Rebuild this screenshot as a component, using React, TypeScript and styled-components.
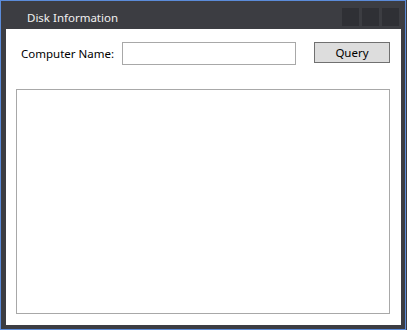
import React from "react";
import styled, { createGlobalStyle } from "styled-components";

//******** COMPONENTS ********//

const GlobalStyle = createGlobalStyle`
  html, body {
    margin: 0;
    padding: 0;
    background: #3c3d42;
  }
  * {
    box-sizing: border-box;
  }
`;

const App = () => {
  return (
    <>
      <GlobalStyle />
      <SWindow>
        <STitleBar>
          <STitle>Disk Information</STitle>
          <SCaptionButtons>
            <SCaptionButton />
            <SCaptionButton />
            <SCaptionButton />
          </SCaptionButtons>
        </STitleBar>
        <SClient>
          <SQueryRow>
            <SLabel>Computer Name:</SLabel>
            <SInput type="text" />
            <SButton type="button">Query</SButton>
          </SQueryRow>
          <SListBox />
        </SClient>
      </SWindow>
    </>
  );
};

export default App;

//******** STYLES ********//

const SWindow = styled.div`
  width: 406px;
  height: 330px;
  border: 1px solid #5b8bd9;
  background: #3c3d42;
  padding: 0 4px 4px 5px;
  display: flex;
  flex-direction: column;
  font-family: "Noto Sans", "Open Sans", sans-serif;
`;

const STitleBar = styled.div`
  height: 28px;
  display: flex;
  align-items: center;
  justify-content: space-between;
  padding: 7px 2px 1px 21px;
`;

const STitle = styled.span`
  color: #f1f1f1;
  font-size: 11.5px;
  margin-top: -1px;
`;

const SCaptionButtons = styled.div`
  display: flex;
  gap: 3px;
  align-self: flex-start;
`;

const SCaptionButton = styled.div`
  width: 17px;
  height: 18px;
  background: #2f3035;
`;

const SClient = styled.div`
  flex: 1;
  background: #ffffff;
  padding: 13px 11px 0 10px;
  display: flex;
  flex-direction: column;
`;

const SQueryRow = styled.div`
  display: flex;
  align-items: flex-start;
  height: 23px;
`;

const SLabel = styled.span`
  width: 106px;
  padding-left: 5px;
  line-height: 23px;
  font-size: 11.5px;
  color: #000;
`;

const SInput = styled.input`
  width: 174px;
  height: 23px;
  border: 1px solid #a8a8a8;
  margin: 0;
  outline: none;
  padding: 0 3px;
`;

const SButton = styled.button`
  margin-left: auto;
  width: 76px;
  height: 21px;
  background: #dddddd;
  border: 1px solid #707070;
  border-radius: 0;
  font-family: inherit;
  font-size: 11.5px;
  color: #000;
  padding: 0;
`;

const SListBox = styled.div`
  margin-top: 24px;
  height: 225px;
  border: 1px solid #a8a8a8;
`;
